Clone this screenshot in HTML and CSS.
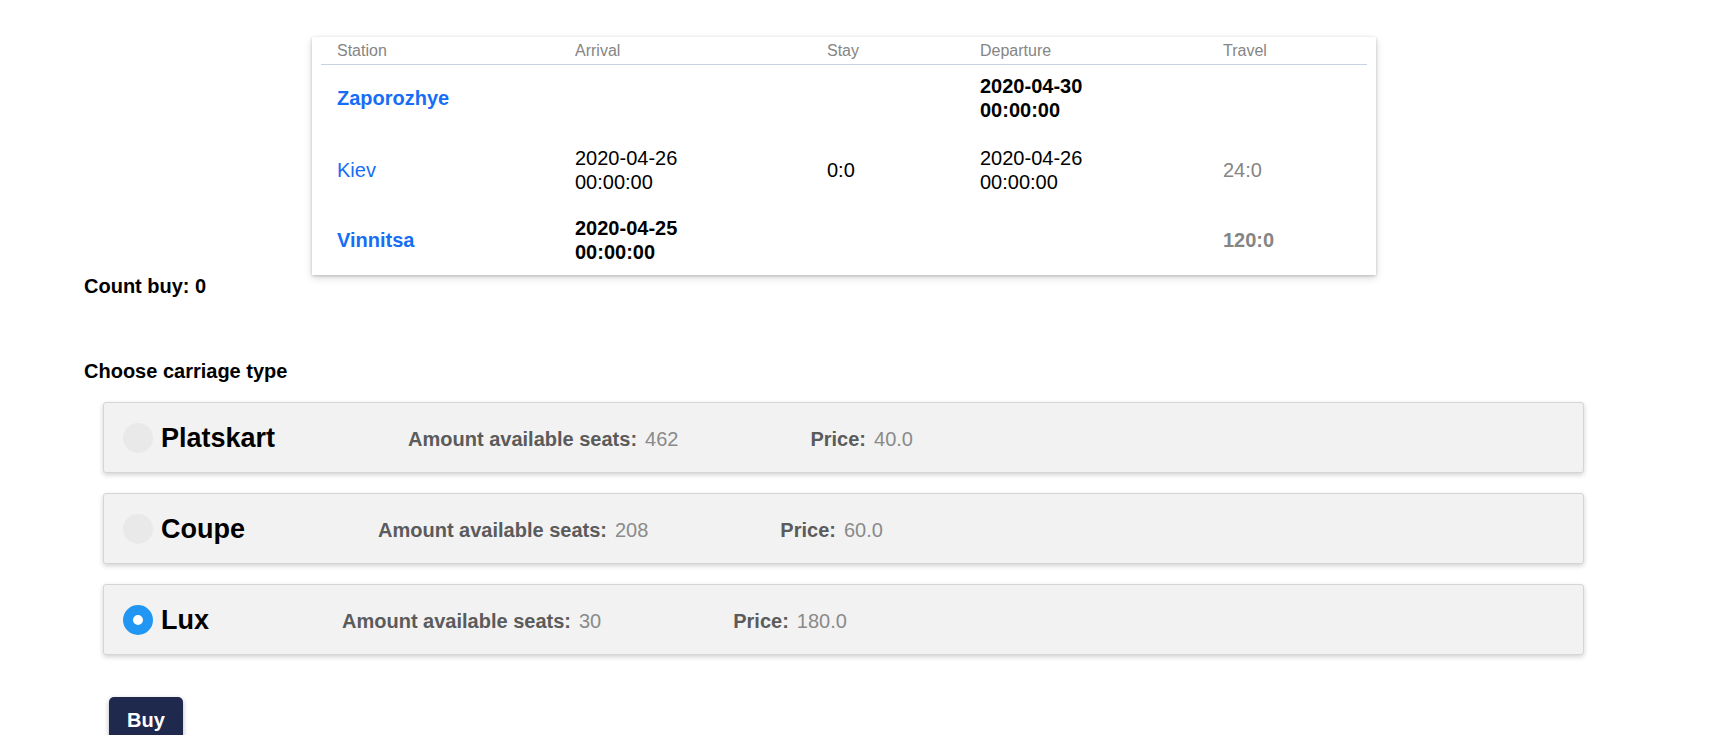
FILE: index.html
```html
<!DOCTYPE html>
<html lang="en">
<head>
<meta charset="utf-8">
<title>Route</title>
<link rel="stylesheet" href="styles.css">
</head>
<body>
<div class="page">
  <div class="route-card">
    <table class="route">
      <colgroup>
        <col class="c-station"><col class="c-arrival"><col class="c-stay"><col class="c-departure"><col class="c-travel">
      </colgroup>
      <thead>
        <tr><th>Station</th><th>Arrival</th><th>Stay</th><th>Departure</th><th>Travel</th></tr>
      </thead>
      <tbody>
        <tr class="major">
          <td class="station">Zaporozhye</td><td></td><td></td><td>2020-04-30<br>00:00:00</td><td class="travel"></td>
        </tr>
        <tr>
          <td class="station">Kiev</td><td>2020-04-26<br>00:00:00</td><td>0:0</td><td>2020-04-26<br>00:00:00</td><td class="travel">24:0</td>
        </tr>
        <tr class="major">
          <td class="station">Vinnitsa</td><td>2020-04-25<br>00:00:00</td><td></td><td></td><td class="travel">120:0</td>
        </tr>
      </tbody>
    </table>
  </div>

  <p class="count">Count buy: 0</p>
  <p class="section-title">Choose carriage type</p>

  <div class="carriages">
    <div class="carriage">
      <span class="radio"></span>
      <span class="name">Platskart</span>
      <span class="stat"><b>Amount available seats:</b><span class="val">462</span></span>
      <span class="stat"><b>Price:</b><span class="val">40.0</span></span>
    </div>
    <div class="carriage">
      <span class="radio"></span>
      <span class="name">Coupe</span>
      <span class="stat"><b>Amount available seats:</b><span class="val">208</span></span>
      <span class="stat"><b>Price:</b><span class="val">60.0</span></span>
    </div>
    <div class="carriage">
      <span class="radio checked"></span>
      <span class="name">Lux</span>
      <span class="stat"><b>Amount available seats:</b><span class="val">30</span></span>
      <span class="stat"><b>Price:</b><span class="val">180.0</span></span>
    </div>
  </div>

  <button class="buy" type="button">Buy</button>
</div>
</body>
</html>
```
FILE: styles.css
```css
html, body {
  margin: 0;
  padding: 0;
  background: #ffffff;
}
body {
  font-family: "Liberation Sans", Arial, sans-serif;
  color: #000;
  overflow: hidden;
}
.page {
  padding-top: 37px;
}

/* route table */
.route-card {
  margin-left: 312px;
  width: 1064px;
  box-sizing: border-box;
  padding: 0 9px;
  background: #fff;
  box-shadow: 0 1px 3px rgba(0,0,0,0.2), 0 3px 8px rgba(0,0,0,0.14);
}
.route {
  width: 1046px;
  table-layout: fixed;
  border-collapse: collapse;
}
.c-station { width: 238px; }
.c-arrival { width: 252px; }
.c-stay { width: 153px; }
.c-departure { width: 243px; }
.c-travel { width: 160px; }
.route th {
  text-align: left;
  font-weight: normal;
  font-size: 16px;
  line-height: 18px;
  color: #858585;
  padding: 5px 16px 4px;
  border-bottom: 1px solid #c6d2e0;
}
.route td {
  font-size: 20px;
  line-height: 24px;
  padding: 11px 16px;
  vertical-align: middle;
  white-space: nowrap;
}
.route tbody tr:first-child td {
  padding-top: 9px;
  padding-bottom: 13px;
}
.route .station {
  color: #176df6;
}
.route .travel {
  color: #858585;
}
.route tr.major td {
  font-weight: bold;
}

/* headings */
.count,
.section-title {
  margin: 0 0 0 84px;
  font-size: 20px;
  line-height: 23px;
  font-weight: bold;
}
.section-title {
  margin-top: 62px;
  margin-bottom: 19px;
}

/* carriages */
.carriages {
  margin-left: 103px;
  width: 1481px;
  display: flex;
  flex-direction: column;
  gap: 20px;
}
.carriage {
  height: 71px;
  box-sizing: border-box;
  display: flex;
  align-items: center;
  padding: 0 19px;
  background: #f2f2f2;
  border: 1px solid #d5d5d5;
  border-radius: 3px;
  box-shadow: 0 2px 5px rgba(0,0,0,0.18);
}
.radio {
  width: 30px;
  height: 30px;
  border-radius: 50%;
  background: #e9e9e9;
  box-sizing: border-box;
  margin-right: 8px;
  flex: none;
}
.radio.checked {
  background: #fff;
  border: 10px solid #2196f3;
}
.name {
  font-size: 27px;
  font-weight: bold;
  color: #000;
  margin-right: 133px;
  padding-top: 2px;
}
.stat {
  font-size: 20px;
  color: #5b5b5b;
  margin-right: 132px;
  white-space: nowrap;
  padding-top: 4px;
}
.stat .val {
  color: #8a8a8a;
  margin-left: 8px;
}

/* buy */
.buy {
  display: block;
  margin: 42px 0 0 109px;
  padding: 12px 18px;
  border: none;
  border-radius: 5px;
  background: #1f294d;
  color: #fff;
  font-family: "Liberation Sans", Arial, sans-serif;
  font-size: 20px;
  line-height: 23px;
  font-weight: bold;
  box-shadow: 0 2px 5px rgba(0,0,0,0.3);
}
```
